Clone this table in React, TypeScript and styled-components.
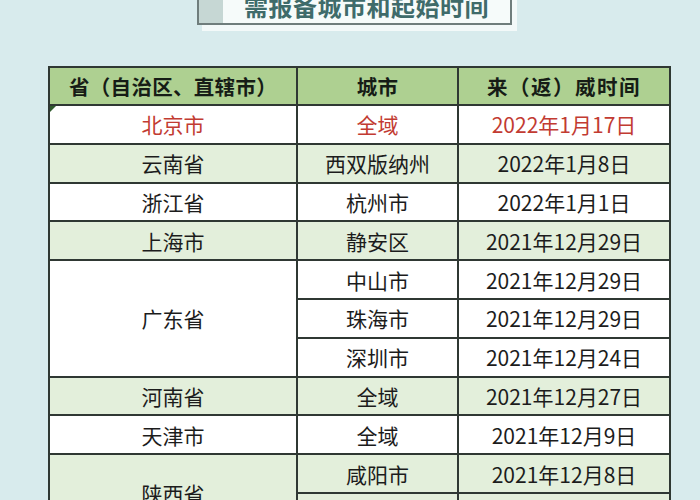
import React from "react";
import styled, { createGlobalStyle } from "styled-components";

const GlobalStyle = createGlobalStyle`
  html, body {
    margin: 0;
    padding: 0;
    background-color: #d8ebed;
    overflow: hidden;
  }
  body {
    font-family: "Noto Sans CJK SC", "Noto Sans", sans-serif;
  }
`;

const Page = styled.div`
  width: 700px;
  height: 500px;
  overflow: hidden;
  background-color: #d8ebed;
`;

const BannerWrap = styled.div`
  padding-left: 197px;
  margin-top: -20px;
`;

const Banner = styled.div`
  width: 311px;
  height: 41px;
  display: flex;
  border: 2px solid #6f7d7c;
  background-color: #f6fbfa;
  box-shadow: 5px 6px 0 #f3f9f9;
`;

const BannerStrip = styled.div`
  width: 24px;
  background-color: #c6d7d4;
`;

const BannerText = styled.div`
  flex: 1;
  display: flex;
  align-items: flex-end;
  justify-content: center;
  padding-bottom: 3px;
  color: #3f6b6a;
  font-size: 24px;
  font-weight: 700;
  line-height: 28px;
  letter-spacing: 0.5px;
`;

const Sheet = styled.div`
  margin-top: 41px;
  margin-left: 48px;
  width: 619px;
  display: grid;
  grid-template-columns: 246px 159px 210px;
  grid-template-rows: 36px;
  grid-auto-rows: 36.8px;
  gap: 2px;
  padding: 2px;
  background-color: #2f3833;
`;

type Tone = "head" | "green" | "white";

const Cell = styled.div<{ $tone: Tone; $red?: boolean; $span?: number }>`
  position: relative;
  display: flex;
  align-items: center;
  justify-content: center;
  grid-row: ${(p) => (p.$span ? `span ${p.$span}` : "auto")};
  background-color: ${(p) =>
    p.$tone === "head" ? "#aed091" : p.$tone === "green" ? "#e3efdb" : "#ffffff"};
  color: ${(p) => (p.$red ? "#c23b32" : "#1c1c1c")};
  font-size: 21px;
  font-weight: 400;
  white-space: nowrap;
`;

const HeadCell = styled(Cell)<{ $spacing?: number }>`
  font-size: 20.5px;
  font-weight: 700;
  color: #161c16;
  letter-spacing: ${(p) => p.$spacing ?? 0.3}px;
`;

const Flag = styled.span`
  position: absolute;
  left: 0;
  top: 0;
  width: 0;
  height: 0;
  border-top: 6px solid #2f5a2c;
  border-right: 6px solid transparent;
`;

type Row = { prov?: string; span?: number; city: string; date: string; tone: Tone; red?: boolean };

const rows: Row[] = [
  { prov: "北京市", city: "全域", date: "2022年1月17日", tone: "white", red: true },
  { prov: "云南省", city: "西双版纳州", date: "2022年1月8日", tone: "green" },
  { prov: "浙江省", city: "杭州市", date: "2022年1月1日", tone: "white" },
  { prov: "上海市", city: "静安区", date: "2021年12月29日", tone: "green" },
  { prov: "广东省", span: 3, city: "中山市", date: "2021年12月29日", tone: "white" },
  { city: "珠海市", date: "2021年12月29日", tone: "white" },
  { city: "深圳市", date: "2021年12月24日", tone: "white" },
  { prov: "河南省", city: "全域", date: "2021年12月27日", tone: "green" },
  { prov: "天津市", city: "全域", date: "2021年12月9日", tone: "white" },
  { prov: "陕西省", span: 2, city: "咸阳市", date: "2021年12月8日", tone: "green" },
  { city: "西安市", date: "2021年12月9日", tone: "green" },
];

const App: React.FC = () => {
  return (
    <Page>
      <GlobalStyle />
      <BannerWrap>
        <Banner>
          <BannerStrip />
          <BannerText>需报备城市和起始时间</BannerText>
        </Banner>
      </BannerWrap>
      <Sheet>
        <HeadCell $tone="head">省（自治区、直辖市）</HeadCell>
        <HeadCell $tone="head">城市</HeadCell>
        <HeadCell $tone="head" $spacing={1.5}>
          来（返）威时间
        </HeadCell>
        {rows.map((r, i) => (
          <React.Fragment key={i}>
            {r.prov && (
              <Cell $tone={r.tone} $red={r.red} $span={r.span}>
                {i === 0 && <Flag />}
                {r.prov}
              </Cell>
            )}
            <Cell $tone={r.tone} $red={r.red}>
              {r.city}
            </Cell>
            <Cell $tone={r.tone} $red={r.red}>
              {r.date}
            </Cell>
          </React.Fragment>
        ))}
      </Sheet>
    </Page>
  );
};

export default App;
